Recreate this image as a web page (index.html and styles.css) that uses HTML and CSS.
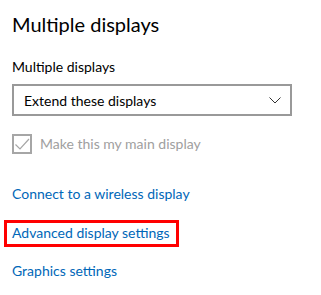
FILE: index.html
```html
<!DOCTYPE html>
<html>
<head>
<meta charset="utf-8">
<link rel="stylesheet" href="styles.css">
</head>
<body>
<div class="page">
  <h1 class="title">Multiple displays</h1>
  <div class="label">Multiple displays</div>
  <div class="select">
    <span class="select-text">Extend these displays</span>
    <svg class="chevron" width="12" height="7" viewBox="0 0 12 7"><path d="M0.5 0.5 L6 6 L11.5 0.5" fill="none" stroke="#333" stroke-width="1"/></svg>
  </div>
  <div class="check-row">
    <span class="checkbox">
      <svg width="16" height="16" viewBox="0 0 16 16"><path d="M1.5 8.5 L6 13 L15 3" fill="none" stroke="#a6a6a6" stroke-width="1.2"/></svg>
    </span>
    <span class="check-label">Make this my main display</span>
  </div>
  <a class="link link-first">Connect to a wireless display</a>
  <div class="highlight"><a class="link">Advanced display settings</a></div>
  <a class="link link-last">Graphics settings</a>
</div>
</body>
</html>
```
FILE: styles.css
```css
html, body {
  margin: 0;
  padding: 0;
  background: #ffffff;
}
body {
  font-family: Lato, "Noto Sans", sans-serif;
  color: #000000;
}
.page {
  display: flex;
  flex-direction: column;
  align-items: flex-start;
  padding: 10px 12px 0 12px;
}
.title {
  margin: 0;
  font-size: 20px;
  line-height: 28px;
  font-weight: 400;
}
.label {
  margin-top: 19px;
  font-size: 14px;
  line-height: 20px;
}
.select {
  margin-top: 7px;
  box-sizing: border-box;
  width: 280px;
  height: 32px;
  border: 2px solid #999999;
  display: flex;
  align-items: center;
  justify-content: space-between;
  padding: 0 9px 0 10px;
  font-size: 14px;
}
.chevron {
  display: block;
}
.check-row {
  margin-top: 18px;
  display: flex;
  align-items: center;
  gap: 8px;
  height: 20px;
}
.checkbox {
  box-sizing: border-box;
  width: 20px;
  height: 20px;
  border: 2px solid #a6a6a6;
  display: flex;
  align-items: center;
  justify-content: center;
}
.checkbox svg {
  display: block;
}
.check-label {
  font-size: 14px;
  line-height: 20px;
  color: #a0a0a0;
}
.link {
  font-size: 14px;
  line-height: 20px;
  color: #0067b8;
  text-decoration: none;
}
.link-first {
  margin-top: 30px;
}
.highlight {
  margin-top: 16px;
  margin-left: -8px;
  border: 3px solid #ff0000;
  padding: 0 6px 1px 5px;
}
.highlight .link {
  display: block;
}
.link-last {
  margin-top: 14px;
}
```
